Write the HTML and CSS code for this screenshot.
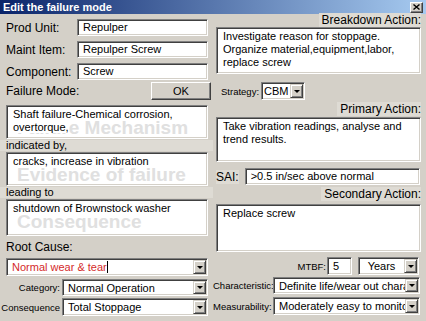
FILE: index.html
```html
<!DOCTYPE html>
<html lang="en">
<head>
    <meta charset="UTF-8">
    <title>Edit the failure mode</title>
    <link rel="stylesheet" href="styles.css">
</head>
<body>
    <div class="window">
        <div class="titlebar">
            <span class="title">Edit the failure mode</span>
            <span class="close">
                <svg width="7" height="6" viewBox="0 0 7 6"><path d="M0.5 0.5 L6.5 5.5 M6.5 0.5 L0.5 5.5" stroke="#000" stroke-width="1.4" fill="none"/></svg>
            </span>
        </div>

        <div class="panes">
            <!-- coluna esquerda -->
            <div class="pane left">
                <div class="field">
                    <span class="label">Prod Unit:</span>
                    <div class="box single">Repulper</div>
                </div>
                <div class="field">
                    <span class="label">Maint Item:</span>
                    <div class="box single">Repulper Screw</div>
                </div>
                <div class="field">
                    <span class="label">Component:</span>
                    <div class="box single">Screw</div>
                </div>

                <div class="mode-head">
                    <span class="label">Failure Mode:</span>
                    <div class="button">OK</div>
                </div>
                <div class="box memo memo-mode">
                    <span class="mark">Failure Mechanism</span>
                    <span class="txt">Shaft failure-Chemical corrosion,<br>overtorque,</span>
                </div>

                <div class="caption">indicated by,</div>
                <div class="box memo memo-evidence">
                    <span class="mark">Evidence of failure</span>
                    <span class="txt">cracks, increase in vibration</span>
                </div>

                <div class="caption">leading to</div>
                <div class="box memo memo-result">
                    <span class="mark">Consequence</span>
                    <span class="txt">shutdown of Brownstock washer</span>
                </div>

                <div class="root-head">Root Cause:</div>
                <div class="box combo root-combo">
                    <div class="combo-text red">Normal wear &amp; tear<span class="caret"></span></div>
                    <div class="combo-btn"></div>
                </div>

                <div class="small-row category-row">
                    <span class="small-label">Category:</span>
                    <div class="box combo">
                        <div class="combo-text">Normal Operation</div>
                        <div class="combo-btn"></div>
                    </div>
                </div>
                <div class="small-row consequence-row">
                    <span class="small-label">Consequence</span>
                    <div class="box combo">
                        <div class="combo-text">Total Stoppage</div>
                        <div class="combo-btn"></div>
                    </div>
                </div>
            </div>

            <!-- coluna direita -->
            <div class="pane right">
                <div class="heading"><span>Breakdown Action:</span></div>
                <div class="box memo memo-breakdown">Investigate reason for stoppage.<br>Organize material,equipment,labor,<br>replace screw</div>

                <div class="strategy-row">
                    <span class="small-label">Strategy:</span>
                    <div class="box combo strategy-combo">
                        <div class="combo-text centered">CBM</div>
                        <div class="combo-btn"></div>
                    </div>
                </div>

                <div class="heading heading-primary"><span>Primary Action:</span></div>
                <div class="box memo memo-primary">Take vibration readings, analyse and<br>trend results.</div>

                <div class="sai-row">
                    <span class="label sai-label">SAI:</span>
                    <div class="box single sai-box">&gt;0.5 in/sec above normal</div>
                </div>

                <div class="heading heading-secondary"><span>Secondary Action:</span></div>
                <div class="box memo memo-secondary">Replace screw</div>

                <div class="mtbf-row">
                    <span class="small-label">MTBF:</span>
                    <div class="box single mtbf-box">5</div>
                    <div class="box combo years-combo">
                        <div class="combo-text centered">Years</div>
                        <div class="combo-btn"></div>
                    </div>
                </div>

                <div class="small-row char-row">
                    <span class="small-label">Characteristic:</span>
                    <div class="box combo">
                        <div class="combo-text">Definite life/wear out characteristic</div>
                        <div class="combo-btn"></div>
                    </div>
                </div>
                <div class="small-row meas-row">
                    <span class="small-label">Measurability:</span>
                    <div class="box combo">
                        <div class="combo-text">Moderately easy to monitor</div>
                        <div class="combo-btn"></div>
                    </div>
                </div>
            </div>
        </div>
    </div>
</body>
</html>
```

FILE: styles.css
```css
body {
    margin: 0;
    padding: 0;
    background-color: #d4d0c8;
    font-family: "Liberation Sans", Arial, sans-serif;
    color: #000;
}

.window {
    width: 426px;
    height: 321px;
    overflow: hidden;
    background-color: #d4d0c8;
}

/* barra de titulo */
.titlebar {
    height: 14px;
    display: flex;
    align-items: center;
    justify-content: space-between;
    padding: 0 3px 0 3px;
    background: linear-gradient(to right, #0a246a, #a6caf0);
}

.title {
    color: #fff;
    font-weight: bold;
    font-size: 11px;
    line-height: 14px;
}

.close {
    width: 13px;
    height: 11px;
    box-sizing: border-box;
    display: flex;
    align-items: center;
    justify-content: center;
    background-color: #d4d0c8;
    border: 1px solid;
    border-color: #fff #404040 #404040 #fff;
    box-shadow: inset -1px -1px 0 #808080;
}

.panes {
    display: grid;
    grid-template-columns: 213px 213px;
}

.pane {
    display: flex;
    flex-direction: column;
}

.left {
    padding: 5px 5px 0 6px;
}

.right {
    padding: 0 5px 0 3px;
}

/* controles */
.box {
    box-sizing: border-box;
    background-color: #fff;
    border: 1px solid;
    border-color: #808080 #fff #fff #808080;
    box-shadow: inset 1px 1px 0 #404040, inset -1px -1px 0 #d4d0c8;
    font-size: 11px;
    white-space: nowrap;
    overflow: hidden;
}

.single {
    height: 17px;
    line-height: 15px;
    padding: 0 5px;
}

.memo {
    position: relative;
    padding: 2px 6px;
    line-height: 13px;
}

.mark {
    position: absolute;
    left: 10px;
    top: 12px;
    font-size: 19px;
    font-weight: bold;
    color: #e0e0e0;
    line-height: 20px;
}

.txt {
    position: relative;
    background-color: #fff;
}

.combo {
    display: flex;
    height: 18px;
}

.combo-text {
    flex: 1;
    min-width: 0;
    overflow: hidden;
    padding: 0 5px;
    line-height: 16px;
}

.combo-text.centered {
    text-align: center;
    padding: 0 2px;
}

.red {
    color: #d42a2a;
}

.caret {
    display: inline-block;
    width: 1px;
    height: 12px;
    background-color: #000;
    vertical-align: -2px;
}

.combo-btn {
    width: 13px;
    margin: 1px 1px 1px 0;
    box-sizing: border-box;
    display: flex;
    align-items: center;
    justify-content: center;
    background-color: #d4d0c8;
    border: 1px solid;
    border-color: #d4d0c8 #404040 #404040 #d4d0c8;
    box-shadow: inset 1px 1px 0 #fff, inset -1px -1px 0 #808080;
}

.combo-btn::after {
    content: "";
    width: 0;
    height: 0;
    border-left: 3px solid transparent;
    border-right: 3px solid transparent;
    border-top: 3px solid #000;
}

.button {
    width: 60px;
    height: 18px;
    box-sizing: border-box;
    font-size: 11px;
    line-height: 16px;
    text-align: center;
    background-color: #d4d0c8;
    border: 1px solid;
    border-color: #fff #404040 #404040 #fff;
    box-shadow: inset -1px -1px 0 #808080;
}

.label {
    font-size: 12px;
}

.small-label {
    font-size: 9.5px;
    white-space: nowrap;
}

/* coluna esquerda */
.field {
    display: flex;
    align-items: center;
    height: 17px;
}

.field + .field {
    margin-top: 5px;
}

.field .label {
    width: 71px;
}

.field .box {
    width: 131px;
}

.mode-head {
    display: flex;
    align-items: center;
    justify-content: space-between;
    height: 18px;
    margin-top: 2px;
    margin-right: -3px;
}

.memo-mode {
    margin-top: 5px;
    height: 34px;
}

.caption {
    height: 11px;
    line-height: 11px;
    font-size: 11px;
    margin: 1px -5px 0 -6px;
    padding-left: 6px;
    background-color: #dedbd4;
}

.memo-evidence {
    margin-top: 1px;
    height: 34px;
}

.memo-result {
    margin-top: 1px;
    height: 37px;
}

.root-head {
    margin-top: 4px;
    height: 15px;
    line-height: 15px;
    font-size: 12px;
}

.root-combo {
    margin-top: 3px;
}

.small-row {
    display: flex;
    align-items: center;
    gap: 2px;
}

.small-row .small-label {
    text-align: right;
}

.category-row,
.consequence-row {
    margin-left: -6px;
}

.category-row .small-label,
.consequence-row .small-label {
    width: 60px;
}

.category-row .combo,
.consequence-row .combo {
    width: 146px;
}

.category-row {
    margin-top: 3px;
}

.category-row .combo {
    height: 17px;
}

.consequence-row {
    margin-top: 2px;
}

/* coluna direita */
.heading {
    height: 13px;
    line-height: 13px;
    font-size: 12px;
    text-align: right;
}

.heading span {
    background-color: #dedbd4;
    padding-left: 3px;
}

.memo-breakdown {
    height: 47px;
}

.strategy-row {
    display: flex;
    align-items: center;
    gap: 2px;
    height: 18px;
    margin-top: 8px;
    padding-left: 5px;
}

.strategy-combo {
    width: 44px;
}

.heading-primary {
    margin-top: 3px;
}

.memo-primary {
    margin-top: 1px;
    height: 45px;
}

.sai-row {
    display: flex;
    align-items: center;
    height: 17px;
    margin-top: 6px;
}

.sai-label {
    background-color: #dedbd4;
}

.sai-box {
    flex: 1;
    margin: 0 1px 0 6px;
}

.heading-secondary {
    margin-top: 3px;
}

.memo-secondary {
    margin-top: 3px;
    height: 48px;
}

.mtbf-row {
    display: flex;
    align-items: center;
    justify-content: flex-end;
    height: 18px;
    margin-top: 5px;
    padding-right: 2px;
}

.mtbf-box {
    width: 25px;
    height: 18px;
    line-height: 16px;
    margin-left: 1px;
}

.years-combo {
    width: 61px;
    margin-left: 6px;
}

.char-row,
.meas-row {
    margin-left: -3px;
}

.char-row .small-label,
.meas-row .small-label {
    width: 58px;
}

.char-row .combo,
.meas-row .combo {
    width: 147px;
}

.char-row {
    margin-top: 2px;
}

.char-row .combo {
    height: 17px;
}

.meas-row {
    margin-top: 3px;
}
```
